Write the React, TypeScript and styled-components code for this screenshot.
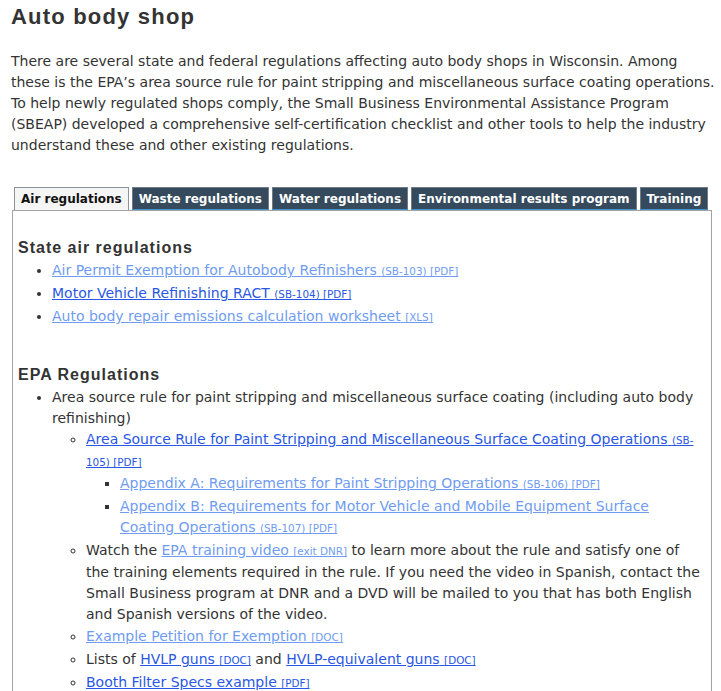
import React from 'react';
import styled, { createGlobalStyle } from 'styled-components';

const GlobalStyle = createGlobalStyle`
  body {
    margin: 0;
    background: #fff;
    font-family: "DejaVu Sans", Verdana, sans-serif;
    color: #333;
  }
`;

const Page = styled.div`
  padding: 4px 0 0 11px;
  font-size: 14px;
  line-height: 21px;
`;

const Title = styled.h1`
  margin: 0;
  font-family: "Liberation Sans", Arial, sans-serif;
  font-size: 22px;
  line-height: 26px;
  letter-spacing: 1.2px;
  font-weight: bold;
  color: #333;
`;

const Intro = styled.p`
  margin: 21px 0 0;
  max-width: 706px;
`;

const Tabs = styled.div`
  margin-top: 31px;
  margin-left: 1px;
  width: 700px;
`;

const TabBar = styled.div`
  display: flex;
  gap: 3px;
  padding-left: 2px;
`;

const Tab = styled.div<{ $active?: boolean }>`
  height: 23px;
  box-sizing: border-box;
  padding: 1px 6px 0;
  font-size: 12px;
  font-weight: bold;
  line-height: 21px;
  white-space: nowrap;
  border: 1px solid ${p => (p.$active ? '#8d939c' : '#6f7b88')};
  border-bottom: ${p => (p.$active ? 'none' : '1px solid #3f93cf')};
  background: ${p => (p.$active ? '#f5f5f5' : '#354a5c')};
  color: ${p => (p.$active ? '#111' : '#fff')};
`;

const Panel = styled.div`
  border: 1px solid #a3a3a3;
  padding: 27px 10px 40px 5px;
`;

const SectionTitle = styled.h2<{ $gap?: number }>`
  margin: ${p => p.$gap ?? 0}px 0 0;
  font-family: "Liberation Sans", Arial, sans-serif;
  font-size: 16px;
  line-height: 20px;
  letter-spacing: 1px;
  font-weight: bold;
  color: #333;
`;

const List = styled.ul<{ $mark: 'disc' | 'circle' | 'square' }>`
  margin: ${p => (p.$mark === 'disc' ? 2 : 0)}px 0 0;
  padding-left: 34px;
  list-style-type: ${p => p.$mark};
`;

const Item = styled.li`
  margin-bottom: 1px;
`;

const Link = styled.a<{ $seen?: boolean }>`
  color: ${p => (p.$seen ? '#6f9cf0' : '#2957e3')};
  text-decoration: underline;
`;

const Kind = styled.span`
  font-size: 10.4px;
`;

const Doc = ({ seen, text, kind }: { seen?: boolean; text: string; kind: string }) => (
  <Link href="#" $seen={seen}>
    {text} <Kind>{kind}</Kind>
  </Link>
);

export default function App() {
  const tabs = [
    'Air regulations',
    'Waste regulations',
    'Water regulations',
    'Environmental results program',
    'Training',
  ];
  return (
    <Page>
      <GlobalStyle />
      <Title>Auto body shop</Title>
      <Intro>
        There are several state and federal regulations affecting auto body shops in Wisconsin. Among
        these is the EPA’s area source rule for paint stripping and miscellaneous surface coating operations.
        To help newly regulated shops comply, the Small Business Environmental Assistance Program
        (SBEAP) developed a comprehensive self-certification checklist and other tools to help the industry
        understand these and other existing regulations.
      </Intro>
      <Tabs>
        <TabBar>
          {tabs.map((t, i) => (
            <Tab key={t} $active={i === 0}>{t}</Tab>
          ))}
        </TabBar>
        <Panel>
          <SectionTitle>State air regulations</SectionTitle>
          <List $mark="disc">
            <Item><Doc seen text="Air Permit Exemption for Autobody Refinishers" kind="(SB-103) [PDF]" /></Item>
            <Item><Doc text="Motor Vehicle Refinishing RACT" kind="(SB-104) [PDF]" /></Item>
            <Item><Doc seen text="Auto body repair emissions calculation worksheet" kind="[XLS]" /></Item>
          </List>
          <SectionTitle $gap={37}>EPA Regulations</SectionTitle>
          <List $mark="disc">
            <Item>
              Area source rule for paint stripping and miscellaneous surface coating (including auto body refinishing)
              <List $mark="circle">
                <Item>
                  <Doc text="Area Source Rule for Paint Stripping and Miscellaneous Surface Coating Operations" kind="(SB-105) [PDF]" />
                  <List $mark="square">
                    <Item><Doc seen text="Appendix A: Requirements for Paint Stripping Operations" kind="(SB-106) [PDF]" /></Item>
                    <Item><Doc seen text="Appendix B: Requirements for Motor Vehicle and Mobile Equipment Surface Coating Operations" kind="(SB-107) [PDF]" /></Item>
                  </List>
                </Item>
                <Item>
                  Watch the <Doc seen text="EPA training video" kind="[exit DNR]" /> to learn more about the rule and satisfy one of
                  the training elements required in the rule. If you need the video in Spanish, contact the
                  Small Business program at DNR and a DVD will be mailed to you that has both English
                  and Spanish versions of the video.
                </Item>
                <Item><Doc seen text="Example Petition for Exemption" kind="[DOC]" /></Item>
                <Item>
                  Lists of <Doc text="HVLP guns" kind="[DOC]" /> and <Doc text="HVLP-equivalent guns" kind="[DOC]" />
                </Item>
                <Item><Doc text="Booth Filter Specs example" kind="[PDF]" /></Item>
              </List>
            </Item>
          </List>
        </Panel>
      </Tabs>
    </Page>
  );
}
